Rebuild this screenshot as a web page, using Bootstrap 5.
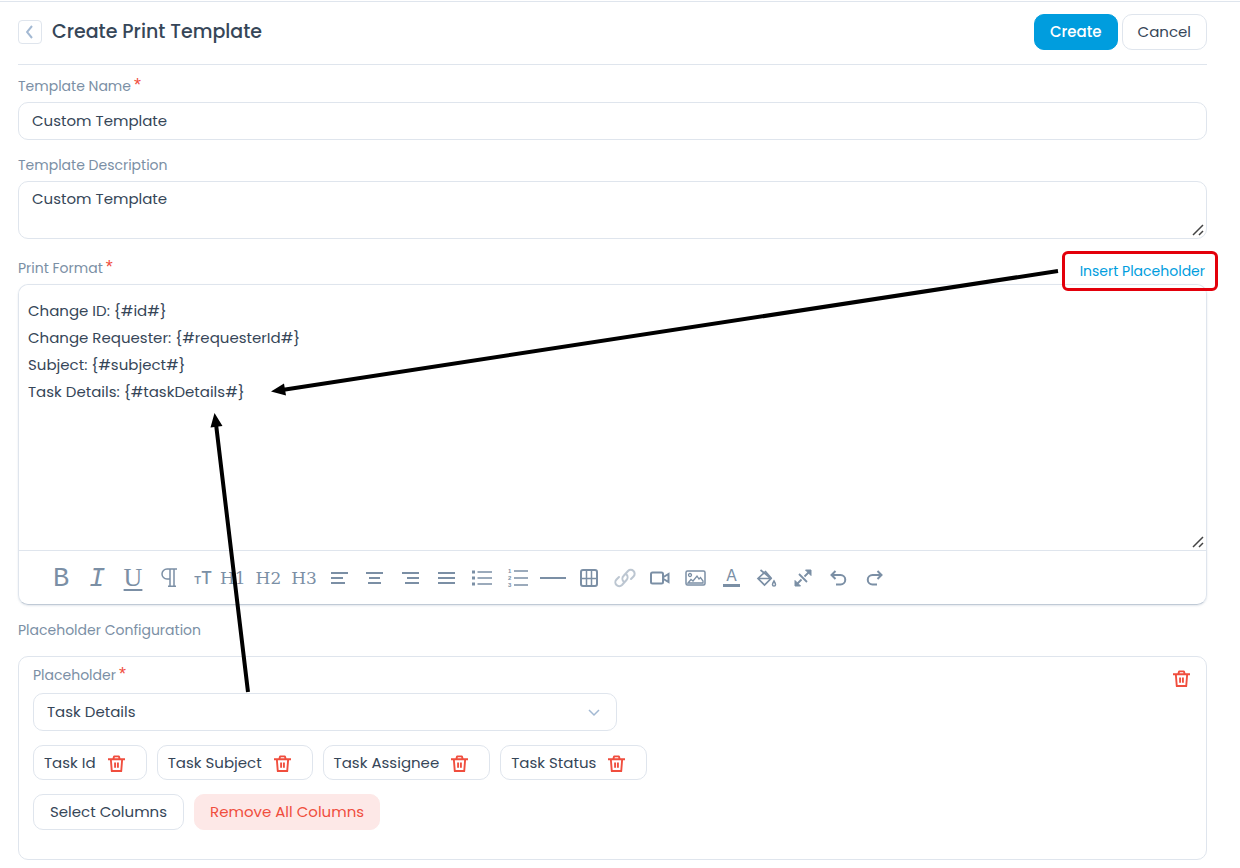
<!DOCTYPE html>
<html lang="en">
<head>
<meta charset="utf-8">
<meta name="viewport" content="width=device-width, initial-scale=1">
<title>Create Print Template</title>
<link href="https://cdn.jsdelivr.net/npm/bootstrap@5.3.0/dist/css/bootstrap.min.css" rel="stylesheet">
<style>
:root{--line:#dfe5ed;--ink:#364658;--soft:#7b8fa5;--blue:#009dde;--red:#f04e3e}
body{font-family:Poppins,Inter,sans-serif;font-size:15px;line-height:24px;color:var(--ink);background:#fff}
.page{border-top:1px solid var(--line);margin-top:1px;padding:0 33px 8px 18px}
.page-head{height:63px;padding-bottom:2px;border-bottom:1px solid var(--line)}
.page-title{font-size:19px;line-height:28px;font-weight:500}
.head-left{gap:10px}
.back{width:24px;height:24px;border-radius:4px}
.btn{--bs-btn-font-size:15px;--bs-btn-line-height:24px;--bs-btn-border-radius:10px;--bs-btn-padding-y:5px;--bs-btn-padding-x:14px;--bs-btn-color:var(--ink);--bs-btn-border-color:var(--line)}
.page-head .btn{--bs-btn-padding-x:15px}
.btn-create{--bs-btn-color:#fff;--bs-btn-bg:var(--blue);--bs-btn-border-color:var(--blue);--bs-btn-font-weight:500}
.panel .btn{--bs-btn-padding-x:16px}
.panel .btn-remove{--bs-btn-color:var(--red);--bs-btn-bg:#fde8e7;--bs-btn-border-color:#fde8e7;--bs-btn-padding-x:15px}
.field-label{font-size:14px;line-height:22px;color:var(--soft)}
.req{color:var(--red);margin-left:3px;font:18px/14px "Liberation Sans",sans-serif}
.form-control,.form-select{font-size:15px;line-height:24px;color:var(--ink);border-color:var(--line);border-radius:10px;padding:6px 13px}
.form-control{background:#fff}
textarea::-webkit-resizer{background:url("data:image/svg+xml,%3Csvg xmlns='http://www.w3.org/2000/svg' width='15' height='15' stroke='%23444' stroke-width='1.5'%3E%3Cpath d='M2 12L12 2M8 12l4-4'/%3E%3C/svg%3E") no-repeat}
.first{padding-top:10px}
.first .field-label{margin-bottom:5px}
.stack{padding-top:14px}
.stack .label-gap{margin-bottom:5px}
.desc{height:58px;padding-top:5px}
.format-head{margin-top:1px;padding-bottom:2px}
.insert{color:var(--blue);font-size:14px;line-height:22px;margin:6px 2px 0 0}
.insert::after{content:"";position:absolute;inset:-9px -13px -9px -18px;border:3px solid #e3000b;border-radius:6px}
.editor{border:1px solid var(--line);border-radius:10px;border-bottom-color:#c0cad6;box-shadow:0 1px 2px #b8c3d066}
.editor-text{height:265px;line-height:27px;padding:12px 9px;border-radius:10px 10px 0 0}
.toolbar{height:54px;border-top:1px solid var(--line);padding-left:24px}
.blocks{flex:0 1 677px;margin-left:-4px}
.tool{border:0;background:none;padding:0;color:var(--soft);height:36px;display:flex;align-items:center;justify-content:center}
.inline-tools .tool{width:36px}
.inline-tools .tool:last-child{width:32px}
.blocks .tool{flex:1 1 0;min-width:0}
.tool svg,.trash svg{display:block;fill:none;stroke:currentColor;stroke-width:2;overflow:visible}
.tool text{fill:currentColor;stroke:none;font-family:Inter,sans-serif}
.tool .list-digits text{font-family:"Liberation Sans",sans-serif}
.letter{font-family:"Liberation Mono",monospace;font-size:27px;line-height:27px;padding-top:4px}
.letter-u{font-family:"Liberation Serif",serif;font-size:26px;padding-top:0;text-decoration-thickness:2px!important;text-underline-offset:3px}
.heading-tool{font-family:"DejaVu Serif",serif;font-size:17px}
.panel{border:1px solid var(--line);border-radius:10px;padding:7px 14px 29px}
.section-label{margin-bottom:15px}
.choice{flex:0 1 584px}
.choice .field-label{margin-bottom:7px}
.form-select{background-image:none}
.chev{right:17px;top:16px}
.trash{border:0;background:none;padding:0;color:var(--red)}
.panel-trash{margin:6px 2px 0 0}
.chips{gap:10px}
.row-gap{margin-top:14px}
.chip{border:1px solid var(--line);border-radius:10px;padding:5px 21px 4px 10px;gap:12px;line-height:24px}
.arrows{left:0;top:0;pointer-events:none}
</style>
</head>
<body class="position-relative">
<svg class="d-none">
  <symbol id="trash" viewBox="0 0 18 18"><path d="M0 4.500h18M5.500 4.500L6.500 1.500h5l1 3M3 4.500l1 12.500h10l1-12.500M7.500 8v5.500M10.500 8v5.500" stroke-linejoin="round"/></symbol>
</svg>
<main class="page">
  <header class="page-head d-flex align-items-center justify-content-between">
    <div class="head-left d-flex align-items-center">
      <button class="btn back p-0 d-flex align-items-center justify-content-center" aria-label="Back"><svg width="8" height="14" fill="none" stroke="#a3b9d3" stroke-width="2"><path d="M6 1L1 7l5 6"/></svg></button>
      <h1 class="page-title mb-0">Create Print Template</h1>
    </div>
    <div class="d-flex gap-1">
      <button class="btn btn-create">Create</button>
      <button class="btn">Cancel</button>
    </div>
  </header>

  <div class="first">
    <label class="field-label d-block" for="name">Template Name<span class="req">*</span></label>
    <input class="form-control" id="name" value="Custom Template">
  </div>
  <div class="stack">
    <label class="field-label label-gap d-block" for="desc">Template Description</label>
    <textarea class="form-control desc d-block" id="desc">Custom Template</textarea>
  </div>
  <div class="stack">
    <div class="format-head d-flex justify-content-between align-items-center">
      <label class="field-label" for="format">Print Format<span class="req">*</span></label>
      <button class="btn insert border-0 p-0 position-relative">Insert Placeholder</button>
    </div>
    <div class="editor">
      <textarea class="form-control editor-text border-0 d-block" id="format">Change ID: {#id#}
Change Requester: {#requesterId#}
Subject: {#subject#}
Task Details: {#taskDetails#}</textarea>
      <div class="toolbar d-flex align-items-center">
        <div class="inline-tools d-flex">
          <button class="tool letter" aria-label="Bold">B</button>
          <button class="tool letter fst-italic" aria-label="Italic">I</button>
          <button class="tool letter letter-u text-decoration-underline" aria-label="Underline">U</button>
          <button class="tool" aria-label="Paragraph"><svg width="16" height="19"><path d="M16 1H6a5 5 0 0 0 0 10h3M9 1v17.500M13 1v17.500M7 18.200h8" stroke-width="1.500"/></svg></button>
          <button class="tool" aria-label="Text size"><svg width="17" height="14"><text x="-1" y="13" font-size="11" font-weight="600">T</text><text x="6" y="13" font-size="17" font-weight="500">T</text></svg></button>
        </div>
        <div class="blocks d-flex">
          <button class="tool heading-tool">H1</button>
          <button class="tool heading-tool">H2</button>
          <button class="tool heading-tool">H3</button>
          <button class="tool" aria-label="Align left"><svg width="18" height="12"><path d="M0 1h17M0 6h12M0 11h14"/></svg></button>
          <button class="tool" aria-label="Align centre"><svg width="18" height="12"><path d="M0 1h17M3 6h11M2 11h13"/></svg></button>
          <button class="tool" aria-label="Align right"><svg width="18" height="12"><path d="M0 1h17M5 6h12M3 11h14"/></svg></button>
          <button class="tool" aria-label="Justify"><svg width="18" height="12"><path d="M0 1h17M0 6h17M0 11h17"/></svg></button>
          <button class="tool" aria-label="Bulleted list"><svg width="20" height="16"><path d="M5.500 2H20M5.500 8H20M5.500 14H20" stroke-width="1.500"/><path d="M0 2h3M0 8h3M0 14h3" stroke-width="3"/></svg></button>
          <button class="tool" aria-label="Numbered list"><svg width="20" height="20"><path d="M6 3h14M6 10h14M6 17h14" stroke-width="1.500"/><g class="list-digits" font-size="6" font-weight="700"><text x="0" y="5">1</text><text x="0" y="12">2</text><text x="0" y="19">3</text></g></svg></button>
          <button class="tool" aria-label="Horizontal line"><svg width="26" height="2"><path d="M0 1h26"/></svg></button>
          <button class="tool" aria-label="Table"><svg width="18" height="18"><rect x="1" y="1" width="16" height="16" rx="2"/><path d="M6.500 1v16M11.500 1v16M1 9.500h16" stroke-width="1.500"/></svg></button>
          <button class="tool opacity-50" aria-label="Link"><svg width="20" height="20" stroke-linecap="round"><path d="M8.500 13.500a4 4 0 0 1 0-5.500L13 3a3.700 3.700 0 0 1 5.500 5.500L16 11M11.500 6.500a4 4 0 0 1 0 5.500L7 17A3.700 3.700 0 0 1 1.500 11.500L4 9"/></svg></button>
          <button class="tool" aria-label="Video"><svg width="20" height="14"><rect x="1" y="1.500" width="12" height="11" rx="1.500"/><path d="M13.500 6L18.500 3v8l-5-3"/></svg></button>
          <button class="tool" aria-label="Image"><svg width="21" height="16"><rect x="1" y="1" width="19" height="14" rx="1.500" stroke-width="1.500"/><circle cx="5" cy="5" r="1.500" stroke-width="1.300"/><path d="M3 13l3-3.500L8 11l4-5 2 3 1.500-1.500L18 11v2z" stroke-width="1.300"/></svg></button>
          <button class="tool" aria-label="Text colour"><svg width="17" height="18"><path d="M0 16.500h17" stroke-width="3"/><text x="8.500" y="12" font-size="16" text-anchor="middle">A</text></svg></button>
          <button class="tool" aria-label="Fill colour"><svg width="20" height="18"><path d="M3.500 1l10.500 8.500-6.500 6.500L1 9.500 8 3M1.500 9.500H14M8 2l6.500 7.500" stroke-width="1.700"/><path d="M17 12q-3 5 0 5t0-5z" stroke-width="1.500"/></svg></button>
          <button class="tool" aria-label="Full screen"><svg width="18" height="18"><path d="M11.500 1H17v5.500zM1 11.500V17h5.500z" fill="currentColor" stroke-width="1"/><path d="M16 2l-5.500 5.500M2 16l5.500-5.500M5 5l8 8" stroke-width="1.800"/></svg></button>
          <button class="tool" aria-label="Undo"><svg width="17" height="16"><path d="M5.500 1L1.500 5l4 4M2 5h8.500a4.700 4.700 0 0 1 0 9.500H6"/></svg></button>
          <button class="tool" aria-label="Redo"><svg width="17" height="16"><path d="M11.500 1l4 4-4 4M15 5H6.500a4.700 4.700 0 0 0 0 9.500H11"/></svg></button>
        </div>
      </div>
    </div>
  </div>

  <div class="field-label stack section-label">Placeholder Configuration</div>
  <section class="panel">
    <div class="d-flex justify-content-between align-items-start">
      <div class="choice">
        <label class="field-label d-block" for="ph">Placeholder<span class="req">*</span></label>
        <div class="position-relative">
          <select class="form-select" id="ph"><option>Task Details</option></select>
          <svg class="chev position-absolute" width="12" height="8" fill="none" stroke="#a3b9d3" stroke-width="1.500"><path d="M1 1l5 5 5-5"/></svg>
        </div>
      </div>
      <button class="trash panel-trash" aria-label="Remove placeholder"><svg width="17" height="17"><use href="#trash"/></svg></button>
    </div>
    <div class="chips d-flex flex-wrap row-gap">
      <div class="chip d-flex align-items-center">Task Id <button class="trash" aria-label="Remove Task Id"><svg width="17" height="17"><use href="#trash"/></svg></button></div>
      <div class="chip d-flex align-items-center">Task Subject <button class="trash" aria-label="Remove Task Subject"><svg width="17" height="17"><use href="#trash"/></svg></button></div>
      <div class="chip d-flex align-items-center">Task Assignee <button class="trash" aria-label="Remove Task Assignee"><svg width="17" height="17"><use href="#trash"/></svg></button></div>
      <div class="chip d-flex align-items-center">Task Status <button class="trash" aria-label="Remove Task Status"><svg width="17" height="17"><use href="#trash"/></svg></button></div>
    </div>
    <div class="chips d-flex row-gap">
      <button class="btn">Select Columns</button>
      <button class="btn btn-remove">Remove All Columns</button>
    </div>
  </section>
</main>
<svg class="arrows position-absolute" width="1220" height="700" stroke="#000" stroke-width="4">
  <path d="M1058 271L282 390M248 692L216 424"/>
  <path stroke="none" d="M271 391.500l13-8 2 12zM214.500 413l8 13-12 1.500z"/>
</svg>
<script src="https://cdn.jsdelivr.net/npm/bootstrap@5.3.0/dist/js/bootstrap.bundle.min.js"></script>
</body>
</html>
